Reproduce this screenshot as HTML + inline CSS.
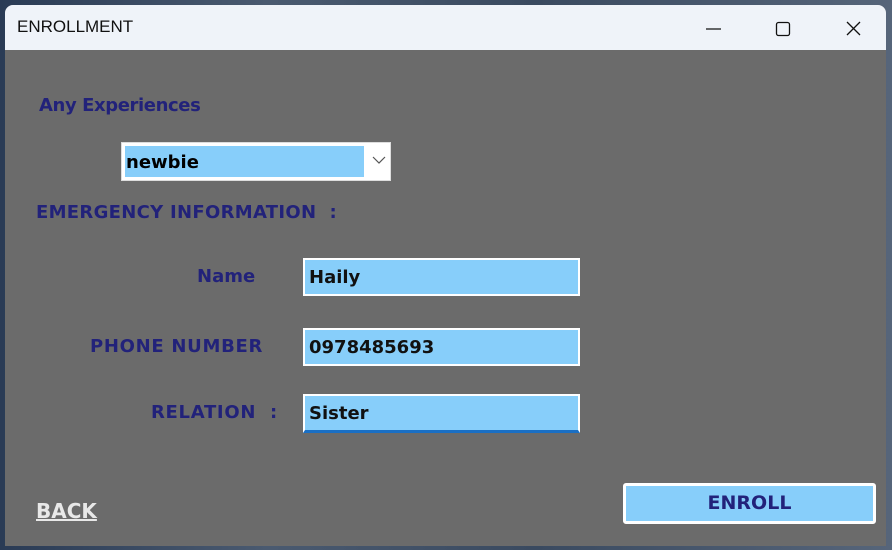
<!DOCTYPE html>
<html><head><meta charset="utf-8"><style>
html,body{margin:0;padding:0}
body{width:892px;height:550px;overflow:hidden;background:linear-gradient(90deg,#2a3b55,#4a5a70 30%,#3a4a60 60%,#56657a);position:relative;font-family:"Comic Sans MS","DejaVu Sans","Liberation Sans",sans-serif}
.win{position:absolute;left:5px;top:5px;width:881px;height:541px;border-radius:8px 8px 0 0;overflow:hidden;background:#6b6b6b}
.tb{position:absolute;left:0;top:0;width:881px;height:45px;background:#eff3f9}
.title{position:absolute;left:12px;top:12px;font:17px "Liberation Sans",sans-serif;color:#111}
.lbl{position:absolute;color:#22227a;font-weight:bold;font-size:18px;white-space:nowrap}
.inp{position:absolute;background:#87cefa;border:2px solid #fff;box-sizing:border-box;font-weight:bold;font-size:18px;color:#111;padding:5px 4px 1px;line-height:26px}
</style></head><body>
<div class="win">
<div class="tb"><div class="title">ENROLLMENT</div>
<svg style="position:absolute;left:695px;top:12px" width="180" height="24"><line x1="6" y1="12" x2="21" y2="12" stroke="#111" stroke-width="1.2"/><rect x="76.5" y="5.5" width="13" height="13" rx="2" fill="none" stroke="#111" stroke-width="1.3"/><path d="M147 5L160 18M160 5L147 18" stroke="#111" stroke-width="1.3"/></svg>
</div>
<div class="lbl" style="left:34px;top:90px;font-size:18px;letter-spacing:-0.4px">Any Experiences</div>
<div style="position:absolute;left:116px;top:137px;width:270px;height:39px;background:#fff;border:1px solid #ddd;box-sizing:border-box"><div style="position:absolute;left:3px;top:3px;width:238px;height:31px;background:#87cefa;font-weight:bold;font-size:18px;line-height:33px;padding-left:1px">newbie</div><svg style="position:absolute;left:250px;top:12px" width="14" height="10"><path d="M1 2L7 8L13 2" fill="none" stroke="#555" stroke-width="1.2"/></svg></div>
<div class="lbl" style="left:31px;top:197px;letter-spacing:0.3px">EMERGENCY INFORMATION &nbsp;:</div>
<div class="lbl" style="left:192px;top:261px">Name</div>
<div class="inp" style="left:298px;top:253px;width:277px;height:38px">Haily</div>
<div class="lbl" style="left:85px;top:331px;letter-spacing:0.7px">PHONE NUMBER</div>
<div class="inp" style="left:298px;top:323px;width:277px;height:38px">0978485693</div>
<div class="lbl" style="left:146px;top:397px;letter-spacing:0.7px">RELATION &nbsp;:</div>
<div class="inp" style="left:298px;top:389px;width:277px;height:39px;border-bottom:3px solid #1a6fc4">Sister</div>
<div class="lbl" style="left:31px;top:494px;color:#e8e8e8;text-decoration:underline;font-size:20px">BACK</div>
<div class="inp" style="left:618px;top:478px;width:253px;height:41px;border:3px solid #fff;border-radius:3px;text-align:center;color:#22227a;font-size:19px;line-height:29px;padding:3px">ENROLL</div>
</div>
</body></html>
